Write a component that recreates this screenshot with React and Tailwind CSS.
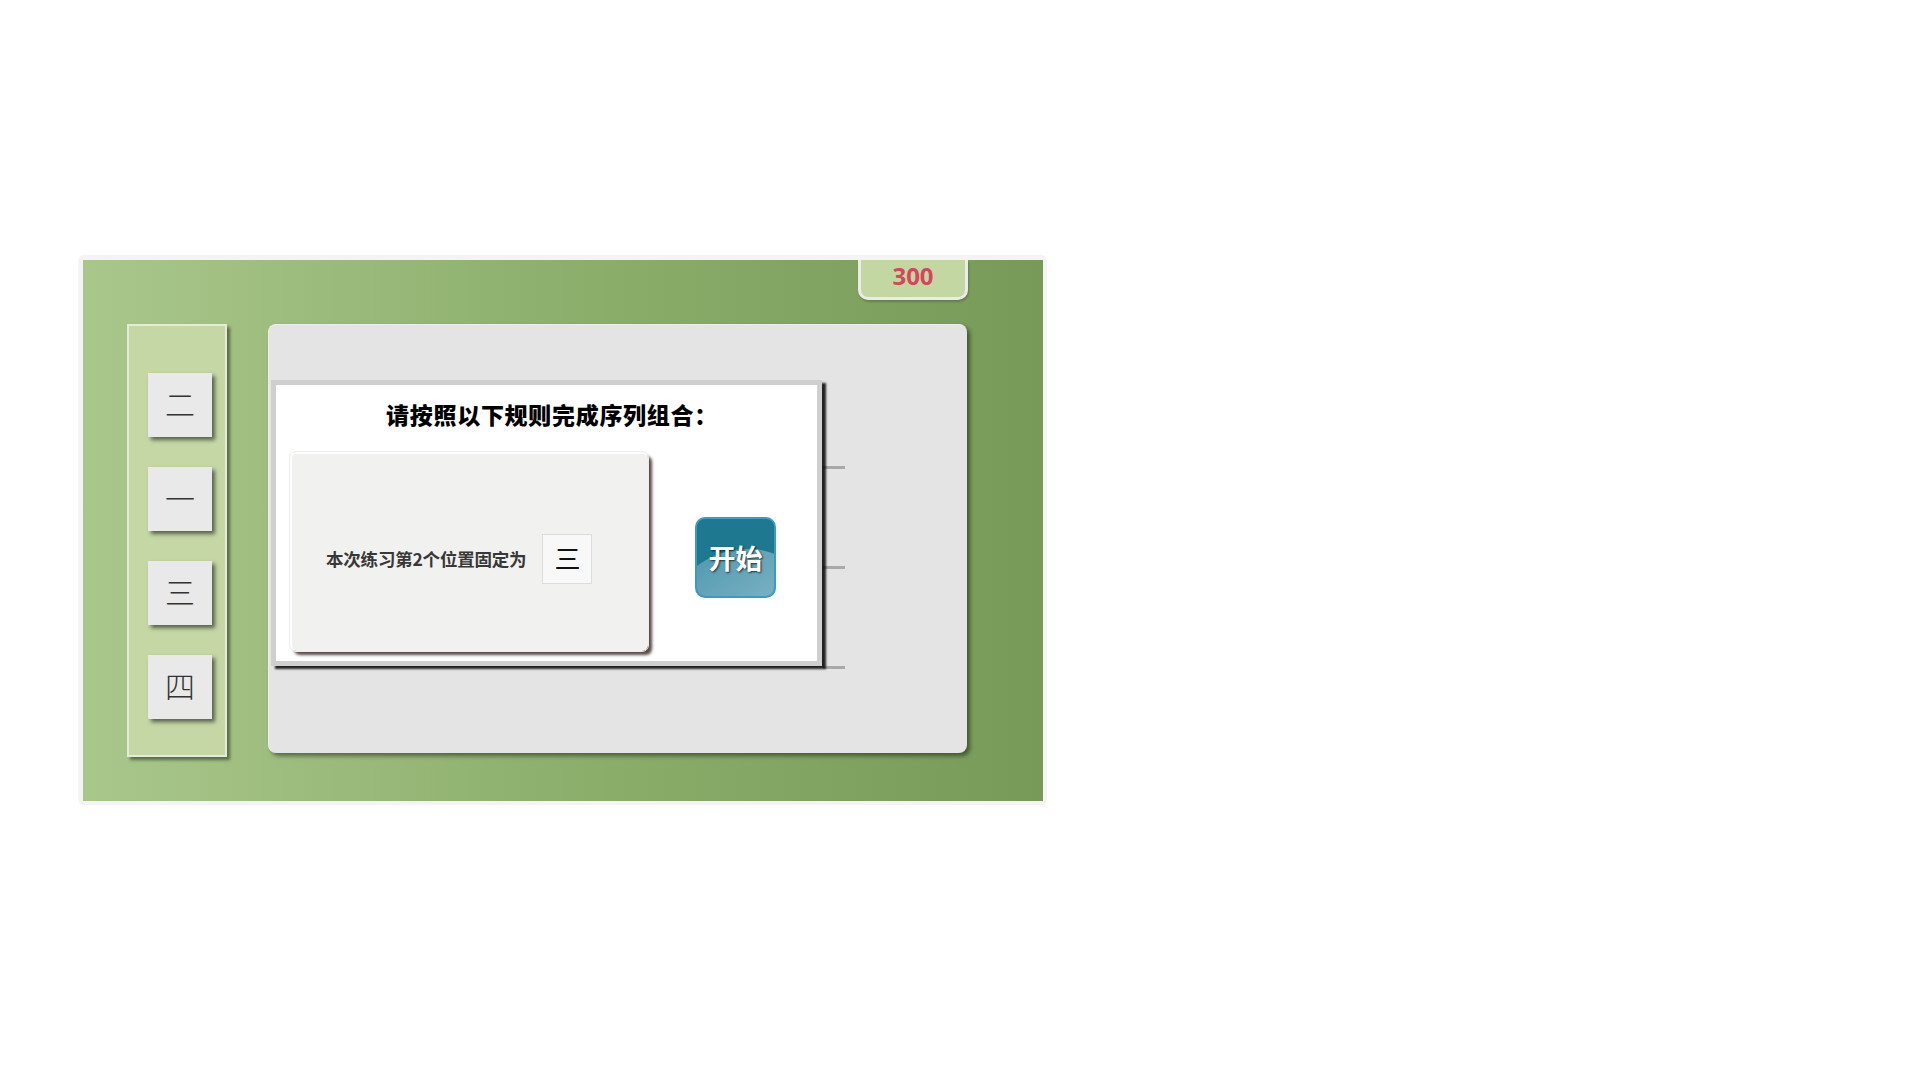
export default function App() {
  const tiles = ['二', '一', '三', '四'];
  const cjk = { fontFamily: '"Noto Sans CJK SC", "Noto Sans", sans-serif' };
  return (
    <div className="w-[1920px] h-[1080px] bg-white pt-[255px] pl-[78px]" style={cjk}>
      <div className="w-[969px] h-[550px] bg-[#f4f4f4] rounded-[6px] pt-[5px] pl-[5px]">
        <div className="relative w-[960px] h-[541px] bg-[linear-gradient(to_right,#a9c78b,#8aad6a_55%,#779a59)] flex items-start pl-[44px] pt-[64px] gap-[41px]">
          {/* score tab */}
          <div
            className="absolute left-[775px] top-0 w-[110px] h-[40px] bg-[#c3d7a3] border-x-[3px] border-b-[3px] border-[#ebebe8] rounded-b-[10px] flex items-center justify-center pb-[5px] shadow-[1px_2px_2px_rgba(0,0,0,0.2)]"
          >
            <span
              className="text-[24px] font-bold text-[#d6465a] leading-none"
              style={{ fontFamily: '"Open Sans", "DejaVu Sans", sans-serif' }}
            >
              300
            </span>
          </div>

          {/* left sidebar */}
          <aside className="w-[100px] h-[433px] bg-[#c4d7a4] border-2 border-[#e4ecd8] shadow-[3px_3px_3px_rgba(0,0,0,0.45)] flex flex-col items-start pl-[19px] pt-[47px] gap-[30px]">
            {tiles.map((t) => (
              <div
                key={t}
                className="w-[64px] h-[64px] bg-[#e8e9e8] shadow-[3px_3px_4px_rgba(0,0,0,0.55)] flex items-center justify-center pb-[5px] text-[30px] font-light text-[#333] leading-none"
              >
                {t}
              </div>
            ))}
          </aside>

          {/* main gray panel */}
          <div className="relative w-[699px] h-[429px] bg-[#e4e4e4] rounded-[8px] border-t border-l border-[#eeeeee] shadow-[3px_3px_4px_rgba(0,0,0,0.45)] pl-[2px] pt-[55px]">
            <div className="absolute left-[554px] top-[141px] w-[22px] h-[3px] bg-[#a9a9a9]" />
            <div className="absolute left-[554px] top-[241px] w-[22px] h-[3px] bg-[#a9a9a9]" />
            <div className="absolute left-[554px] top-[341px] w-[22px] h-[3px] bg-[#a9a9a9]" />

            {/* dialog */}
            <div className="relative z-10 w-[551px] h-[286px] border-[5px] border-[#cfcfcf] bg-white shadow-[4px_3px_2px_rgba(0,0,0,0.85)]">
              <div className="pt-[14px] pl-[11px] text-center text-[23px] leading-[30px] font-black text-black tracking-[0.7px]">
                请按照以下规则完成序列组合：
              </div>
              <div className="flex items-start pl-[14px] mt-[23px]">
                <div className="w-[358px] h-[199px] bg-[#f1f1f0] border-t-2 border-l-2 border-white outline outline-[#ececec] rounded-[6px] shadow-[4px_4px_3px_rgba(60,45,40,0.85)] flex items-center pl-[34px] pt-[13px] gap-[16px]">
                  <span className="text-[17.5px] font-bold text-[#383838] leading-none tracking-[-0.2px]">
                    本次练习第2个位置固定为
                  </span>
                  <div className="w-[50px] h-[50px] bg-[#f8f8f8] border border-[#dddddd] flex items-center justify-center pb-[3px] text-[26px] text-[#111] leading-none">
                    三
                  </div>
                </div>
                <button className="relative ml-[47px] mt-[65px] w-[81px] h-[81px] rounded-[10px] border-2 border-[#3a9dbf] bg-[#1d7890] overflow-hidden flex items-center justify-center">
                  <div className="absolute left-[-30%] top-[40%] w-[170%] h-[130%] rounded-[50%] rotate-[-14deg] bg-[linear-gradient(160deg,#4e97af,#93bfcd)]" />
                  <span className="relative text-[27px] font-bold text-white leading-none [text-shadow:1px_1px_2px_rgba(0,0,0,0.7)]">
                    开始
                  </span>
                </button>
              </div>
            </div>
          </div>
        </div>
      </div>
    </div>
  );
}
